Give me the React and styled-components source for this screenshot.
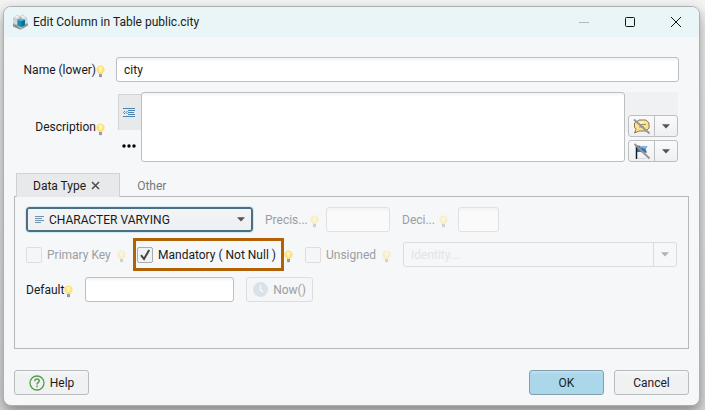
import React from "react";
import styled, { createGlobalStyle, css } from "styled-components";

const GlobalStyle = createGlobalStyle`
  * { box-sizing: border-box; }
  body {
    margin: 0;
    background: linear-gradient(#f4f4f4, #dcdcdc);
    color: #1a1a1a;
    font: 12px/16px Roboto, "Noto Sans", sans-serif;
  }
  button, input, select, textarea { font: inherit; color: inherit; margin: 0; }
`;

const Desktop = styled.div`
  min-height: 100vh;
  padding: 6px 5px 4px 3px;
  display: flex;
  overflow: hidden;
`;

const Window = styled.main`
  flex: 1;
  display: flex;
  flex-direction: column;
  border: 1px solid #adb0b1;
  border-radius: 8px;
  background: #f5f7f9;
  box-shadow: 0 6px 14px rgba(0, 0, 0, 0.4);
`;

const TitleBar = styled.header`
  height: 30px;
  padding-left: 8px;
  display: flex;
  align-items: center;
  border-radius: 7px 7px 0 0;
  background: #e9f5f7;
`;

const Title = styled.h1`
  flex: 1;
  margin: 0 0 0 4px;
  font-size: 12px;
  font-weight: 400;
`;

const WindowButton = styled.button`
  width: 46px;
  height: 30px;
  padding: 0;
  border: 0;
  background: none;
  display: grid;
  place-items: center;
`;

const General = styled.section`
  padding: 20px 20px 0 15px;
  display: grid;
  grid-template-columns: 86px 1fr;
  gap: 10px 11px;
  align-items: center;
`;

const FieldLabel = styled.label`
  display: flex;
  align-items: center;
  justify-content: ${(p) => (p.$end ? "flex-end" : "flex-start")};
  gap: ${(p) => p.$gap || 0}px;
  width: ${(p) => (p.$width ? `${p.$width}px` : "auto")};
  color: ${(p) => (p.$muted ? "#9b9ea0" : "inherit")};
  white-space: nowrap;
`;

const BulbIcon = styled.svg`
  flex: none;
  width: 9px;
  height: 13px;
  margin-top: 4px;
  opacity: ${(p) => (p.$muted ? 0.4 : 1)};
`;

const TextInput = styled.input`
  height: 25px;
  width: ${(p) => (p.$width ? `${p.$width}px` : "100%")};
  padding: 0 7px;
  border: 1px solid #bcbec0;
  border-radius: 3px;
  background: linear-gradient(#f2f3f3, #fff 4px);
  &:disabled { border-color: #dfe1e2; background: linear-gradient(#f2f3f3, #fafafa 5px); }
`;

const Description = styled.div`
  display: flex;
  height: 70px;
  padding-right: 1px;
`;

const SideTools = styled.div`
  width: 25px;
  padding: 2px 0 0 2px;
  display: flex;
  flex-direction: column;
`;

const SideButton = styled.button`
  height: ${(p) => (p.$active ? 40 : 36)}px;
  padding: 0 2px 0 0;
  display: grid;
  place-items: center;
  border: 0;
  border-left: ${(p) => (p.$active ? "1px solid #d2d4d5" : "0")};
  border-top: ${(p) => (p.$active ? "1px solid #d2d4d5" : "0")};
  background: ${(p) => (p.$active ? "#e8e9ea" : "none")};
`;

const TextArea = styled.textarea`
  flex: 1;
  resize: none;
  padding: 4px 7px;
  border: 1px solid #bcbec0;
  border-radius: 3px;
  background: linear-gradient(#f2f3f3, #fff 4px);
`;

const Markers = styled.div`
  width: 53px;
  padding-left: 3px;
  display: flex;
  flex-direction: column;
  justify-content: flex-end;
  gap: 3px;
  background: linear-gradient(#f0f1f3 40px, transparent 40px);
`;

const SplitButton = styled.div`
  height: 22px;
  display: flex;
  border: 1px solid #bcbec0;
  border-radius: 3px;
  background: linear-gradient(#fafafb, #eff0f2);
`;

const SplitPart = styled.button`
  width: ${(p) => (p.$arrow ? "auto" : "25px")};
  flex: ${(p) => (p.$arrow ? 1 : "none")};
  padding: 0;
  border: 0;
  border-left: ${(p) => (p.$arrow ? "1px solid #bcbec0" : "0")};
  background: none;
  display: grid;
  place-items: center;
`;

const TabList = styled.div`
  margin: 11px 10px 0 12px;
  display: flex;
  z-index: 1;
`;

const Tab = styled.button`
  height: 24px;
  margin-bottom: -1px;
  padding: 0 19px 0 16px;
  display: flex;
  align-items: center;
  gap: 5px;
  border: 1px solid transparent;
  border-bottom: 0;
  background: none;
  color: #777a7c;
  ${(p) => p.$active && css`
    border-color: #cfd1d2;
    background: #e7e9ea;
    color: #1a1a1a;
  `}
`;

const TabPanel = styled.section`
  flex: 1;
  margin: 0 10px;
  padding: 10px 11px;
  display: flex;
  flex-direction: column;
  gap: 10px;
  border: 1px solid #b5b7b9;
`;

const Row = styled.div`
  height: 25px;
  display: flex;
  align-items: center;
  gap: 12px;
`;

const TypeBox = styled.div`
  position: relative;
  width: 227px;
  svg { position: absolute; top: 8px; pointer-events: none; }
  svg:first-child { left: 9px; }
  svg:last-child { right: 8px; top: 10px; }
`;

const TypeSelect = styled.select`
  appearance: none;
  display: block;
  width: 100%;
  height: 25px;
  padding: 0 21px;
  border: 2px solid #4c6f84;
  border-radius: 3px;
  outline: 1px solid #d3e8f1;
  background: linear-gradient(#f3f4f5, #edeff1);
`;

const Options = styled.div`
  display: grid;
  grid-template-columns: 107px 172px 98px 1fr;
  grid-template-rows: 25px;
  align-items: center;
`;

const OptionCell = styled.div`
  display: flex;
  align-items: center;
  justify-content: space-between;
  padding-right: ${(p) => p.$end || 0}px;
`;

const CheckLabel = styled.label`
  display: flex;
  align-items: center;
  gap: 5px;
  white-space: nowrap;
  color: ${(p) => (p.$muted ? "#9b9ea0" : "inherit")};
  ${(p) => p.$highlight && css`
    width: 151px;
    height: 33px;
    padding-left: 1px;
    border: 3px solid #b26105;
  `}
`;

const CheckBox = styled.input`
  appearance: none;
  flex: none;
  width: 16px;
  height: 16px;
  border: 1px solid #a9abad;
  border-radius: 2px;
  background: #f5f6f7;
  &:disabled { border-color: #dcdee0; }
  &:checked {
    background: #f0f1f2 url("data:image/svg+xml,%3Csvg xmlns='http://www.w3.org/2000/svg' viewBox='0 0 14 14'%3E%3Cpath d='M3 7.2l3 3.8 5.2-9' fill='none' stroke='%23444' stroke-width='2'/%3E%3C/svg%3E");
  }
`;

const Combo = styled.div`
  height: 25px;
  display: flex;
  border: 1px solid #dadcde;
  border-radius: 3px;
`;

const ComboInput = styled.input`
  flex: 1;
  min-width: 0;
  padding: 0 7px;
  border: 0;
  background: none;
  &::placeholder { color: #e2e4e6; opacity: 1; }
`;

const ComboArrow = styled.button`
  width: 23px;
  padding: 0;
  border: 0;
  border-left: 1px solid #dadcde;
  background: none;
  display: grid;
  place-items: center;
`;

const Button = styled.button`
  width: ${(p) => p.$width || 75}px;
  height: 25px;
  padding: 0;
  display: flex;
  align-items: center;
  justify-content: center;
  gap: 5px;
  border: 1px solid #b9bbbd;
  border-radius: 3px;
  background: linear-gradient(#f7f8f9, #eff1f3 4px);
  ${(p) => p.$primary && css`
    border-color: #829fad;
    background: linear-gradient(#c2e2f0, #abd7eb 3px);
  `}
  &:disabled { border-color: #dcdee0; background: #f4f6f7; color: #9b9ea0; }
`;

const Footer = styled.footer`
  padding: 21px 10px 10px;
  display: flex;
  gap: 10px;
`;

const Spacer = styled.span`
  flex: 1;
`;

const Bulb = ({ muted }) => (
  <BulbIcon viewBox="0 0 9 13" $muted={muted} aria-hidden="true">
    <path d="M4.5.5A4.2 4.2 0 0 0 .3 4.700c0 2 1.900 2.500 2.200 4.300h4c.3-1.800 2.200-2.300 2.200-4.300A4.200 4.200 0 0 0 4.500.5z" fill="#fbe27a" />
    <path d="M2.500 2.500c1-1 3-1 4 0L5.300 7H3.700z" fill="#fff3b8" />
    <path d="M3 9h3v2.200l-.8 1H3.800L3 11.200z" fill="#9a98ad" />
  </BulbIcon>
);

const Arrow = ({ color = "#525456" }) => (
  <svg width="8" height="5" viewBox="0 0 8 5" aria-hidden="true">
    <path d="M0 .2h8L4 4.600z" fill={color} />
  </svg>
);

const AppLogo = () => (
  <svg width="17" height="16" viewBox="0 0 17 16" aria-hidden="true">
    <path d="M1 4l4-3 3 1.200L11 .6l4 3.400.8 7L9 15.500 1 12z" fill="#b9bcbe" />
    <path d="M1.500 4L5 1.200l3 1.500L5 5zM8.500 2.500L11 1l3.500 3L11 5z" fill="#e9ebec" />
    <path d="M1 5l4 1v4.500L1 9zM12 5.500l3-1V9l-3 1z" fill="#d5d8da" />
    <path d="M1 10l4 1.500 4 3.500-1 .5-7-3zM12 11l4-1.500v2L9 15.500z" fill="#8b9094" />
    <path d="M5.500 6L9 4.800 13 6v5l-4 2-3.500-1.500z" fill="#128fb5" />
    <path d="M5.500 6L9 4.800 13 6 9.500 7.300z" fill="#45bfdc" />
    <path d="M9.500 7.300L13 6v5l-3.500 2z" fill="#0b6e91" />
  </svg>
);

const LinesIcon = () => (
  <svg width="9" height="9" viewBox="0 0 9 9" aria-hidden="true">
    <path d="M0 1.500h9M0 3.500h7M0 5.500h9M0 7.500h6" stroke="#6f93ad" fill="none" />
  </svg>
);

const IndentIcon = () => (
  <svg width="12" height="11" viewBox="0 0 12 11" aria-hidden="true">
    <path d="M0 1.500h12M5 3.500h7M5 5.500h6M5 7.500h7M0 9.500h12" stroke="#4a84b5" fill="none" />
    <path d="M2 4L.5 5.500 2 7M4.500 4L3 5.500 4.500 7" stroke="#4a84b5" fill="none" />
  </svg>
);

const CommentOffIcon = () => (
  <svg width="18" height="17" viewBox="0 0 18 17" aria-hidden="true">
    <path d="M6 2h7l3 3v5l-3 3H6l-4.500 2L3 11.500 1.500 9V5z" fill="#fbe38c" stroke="#857853" strokeLinejoin="round" />
    <path d="M4 5.500C5.500 3.500 9 3 12 3.500L7 7z" fill="#fff4c2" />
    <path d="M6 6.500h7M6 9h5" stroke="#9a8d62" />
    <path d="M1 1.500l15.500 14" stroke="#969696" strokeWidth="2" />
  </svg>
);

const FlagOffIcon = () => (
  <svg width="18" height="17" viewBox="0 0 18 17" aria-hidden="true">
    <path d="M3.500 3c3-1.500 5 1.500 11 .3L12.500 6l1.500 3.500C10 10.500 7 8 3.500 9.500z" fill="#3276b4" />
    <path d="M7 3c3 0 4 1 7.500.3l-2 2.500C10 5.500 9 4.500 7 4.500z" fill="#85b7df" />
    <path d="M3.500 2.500v13.500" stroke="#151c26" strokeWidth="1.500" />
    <path d="M5 15.500h8" stroke="#dadada" />
    <path d="M1.500 1l15 14.500" stroke="#969696" strokeWidth="2" />
  </svg>
);

const splitButtons = [
  { name: "Comment", Icon: CommentOffIcon },
  { name: "Flag", Icon: FlagOffIcon },
];

export default function App() {
  return (
    <Desktop>
      <GlobalStyle />
      <Window>
        <TitleBar>
          <AppLogo />
          <Title>Edit Column in Table public.city</Title>
          <WindowButton aria-label="Minimize">
            <svg width="10" height="10"><path d="M0 5.500h10" stroke="#b1babc" /></svg>
          </WindowButton>
          <WindowButton aria-label="Maximize">
            <svg width="10" height="10"><rect x=".5" y=".5" width="9" height="9" rx="1" fill="none" stroke="#111" /></svg>
          </WindowButton>
          <WindowButton aria-label="Close">
            <svg width="10" height="10"><path d="M0 0l10 10M10 0L0 10" stroke="#111" /></svg>
          </WindowButton>
        </TitleBar>

        <General>
          <FieldLabel htmlFor="name" $end>Name (lower)<Bulb /></FieldLabel>
          <TextInput id="name" defaultValue="city" />
          <FieldLabel htmlFor="description" $end>Description<Bulb /></FieldLabel>
          <Description>
            <SideTools>
              <SideButton $active aria-label="Editor"><IndentIcon /></SideButton>
              <SideButton aria-label="More">
                <svg width="14" height="4"><circle cx="2" cy="2" r="1.700" /><circle cx="7" cy="2" r="1.700" /><circle cx="12" cy="2" r="1.700" /></svg>
              </SideButton>
            </SideTools>
            <TextArea id="description" />
            <Markers>
              {splitButtons.map(({ name, Icon }) => (
                <SplitButton key={name}>
                  <SplitPart aria-label={name}><Icon /></SplitPart>
                  <SplitPart $arrow aria-label={`${name} options`}><Arrow /></SplitPart>
                </SplitButton>
              ))}
            </Markers>
          </Description>
        </General>

        <TabList role="tablist">
          <Tab role="tab" aria-selected="true" $active>
            Data Type
            <svg width="9" height="9" aria-hidden="true"><path d="M1 1l7 7M8 1L1 8" stroke="#4a4c4e" strokeWidth="1.500" /></svg>
          </Tab>
          <Tab role="tab" aria-selected="false">Other</Tab>
        </TabList>

        <TabPanel role="tabpanel">
          <Row>
            <TypeBox>
              <LinesIcon />
              <TypeSelect aria-label="Data type"><option>CHARACTER VARYING</option></TypeSelect>
              <Arrow />
            </TypeBox>
            <FieldLabel htmlFor="precision" $muted $gap={2} $width={49}>Precis...<Bulb muted /></FieldLabel>
            <TextInput id="precision" disabled $width={64} />
            <FieldLabel htmlFor="decimal" $muted $gap={4} $width={44}>Deci...<Bulb muted /></FieldLabel>
            <TextInput id="decimal" disabled $width={41} />
          </Row>
          <Options>
            <OptionCell $end={7}>
              <CheckLabel $muted><CheckBox type="checkbox" disabled />Primary Key</CheckLabel>
              <Bulb muted />
            </OptionCell>
            <OptionCell $end={12}>
              <CheckLabel $highlight><CheckBox type="checkbox" defaultChecked />Mandatory ( Not Null )</CheckLabel>
              <Bulb />
            </OptionCell>
            <OptionCell $end={12}>
              <CheckLabel $muted><CheckBox type="checkbox" disabled />Unsigned</CheckLabel>
              <Bulb muted />
            </OptionCell>
            <Combo>
              <ComboInput aria-label="Identity" placeholder="Identity..." disabled />
              <ComboArrow aria-label="Identity options" disabled><Arrow color="#b0b2b4" /></ComboArrow>
            </Combo>
          </Options>
          <Row>
            <FieldLabel htmlFor="default" $width={47}>Default<Bulb /></FieldLabel>
            <TextInput id="default" $width={149} />
            <Button disabled $width={67}>
              <svg width="15" height="15" aria-hidden="true"><circle cx="7.500" cy="7.500" r="7.500" fill="#dae2e9" /><path d="M7.500 3v5l3 2" stroke="#f5f7f9" strokeWidth="1.500" fill="none" /></svg>
              Now()
            </Button>
          </Row>
        </TabPanel>

        <Footer>
          <Button>
            <svg width="16" height="16" viewBox="0 0 16 16" fill="none" stroke="#579b4b" aria-hidden="true">
              <circle cx="8" cy="8" r="7" strokeWidth="1.300" />
              <path d="M5.800 6.200c0-3 4.400-2.700 4.400-.2 0 1.600-2.200 1.600-2.200 3.500M8 10.600v1.600" strokeWidth="1.500" />
            </svg>
            Help
          </Button>
          <Spacer />
          <Button $primary>OK</Button>
          <Button>Cancel</Button>
        </Footer>
      </Window>
    </Desktop>
  );
}
